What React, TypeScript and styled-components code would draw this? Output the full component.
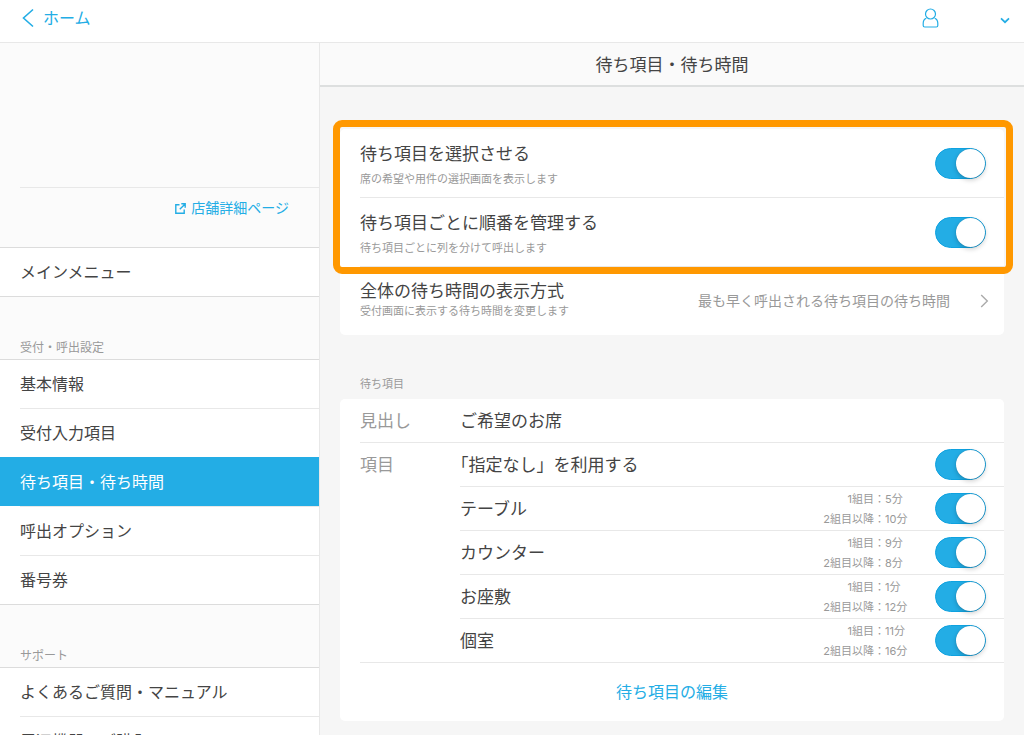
import React, { useState } from "react";
import styled, { createGlobalStyle, css } from "styled-components";

const accent = "#23ade5";
const line = "#e8e8e8";

const GlobalStyle = createGlobalStyle`
  *, *::before, *::after { box-sizing: border-box; }
  body {
    margin: 0;
    background: #fff;
    color: #444;
    font-family: Inter, "Noto Sans CJK JP", sans-serif;
    font-size: 16px;
    line-height: 20px;
  }
  button, input { font: inherit; color: inherit; }
  a { color: inherit; text-decoration: none; }
  h1, h2, p, ul, dl, dd { margin: 0; padding: 0; font-weight: 400; }
  ul { list-style: none; }
`;

const Shell = styled.div`
  display: flex;
  flex-direction: column;
  height: calc(100vh - 16px);
  overflow: hidden;
`;

const TopBar = styled.header`
  flex: none;
  display: flex;
  align-items: center;
  justify-content: space-between;
  height: 43px;
  padding: 0 14px 6px 22px;
  border-bottom: 1px solid ${line};
  color: ${accent};
`;

const HomeLink = styled.a`
  display: flex;
  align-items: center;
  gap: 8px;
`;

const AccountButton = styled.button`
  display: flex;
  align-items: center;
  gap: 61px;
  padding: 0;
  border: 0;
  background: none;
  color: ${accent};
`;

const Columns = styled.div`
  flex: 1;
  display: grid;
  grid-template-columns: 320px 1fr;
  min-height: 0;
`;

const Sidebar = styled.nav`
  min-height: 0;
  overflow: hidden;
  background: #fbfbfb;
  border-right: 1px solid ${line};
`;

const StoreBlock = styled.div`
  height: 205px;
  padding: 144px 0 0 20px;
  border-bottom: 1px solid #dcdcdc;
`;

const StoreLinkRow = styled.div`
  display: flex;
  justify-content: flex-end;
  padding: 10px 30px 0 0;
  border-top: 1px solid ${line};
`;

const StoreLink = styled.a`
  display: flex;
  align-items: center;
  gap: 5px;
  color: ${accent};
  font-size: 14px;
`;

const SideHeading = styled.h2`
  padding: 41px 20px 1px;
  color: #999;
  font-size: 12px;
`;

const SideList = styled.ul`
  background: #fff;
  border-bottom: 1px solid #dcdcdc;
`;

const SideSection = styled.section`
  ${SideList} { border-top: 1px solid #dcdcdc; }
`;

const SideLink = styled.a`
  display: flex;
  align-items: center;
  height: 48px;
  padding-bottom: 1px;
`;

const SideItem = styled.li<{ $active?: boolean }>`
  padding-left: 20px;
  background: ${(p) => (p.$active ? accent : "transparent")};
  color: ${(p) => (p.$active ? "#fff" : "inherit")};
  &:not(:first-child) > ${SideLink} {
    height: 49px;
    border-top: 1px solid ${(p) => (p.$active ? accent : line)};
  }
`;

const Main = styled.main`
  min-width: 0;
  overflow: hidden;
  background: #f6f6f6;
`;

const PageTitle = styled.h1`
  height: 44px;
  padding-top: 12px;
  background: #fafafa;
  border-bottom: 2px solid #dddfdf;
  font-size: 17px;
  text-align: center;
`;

const Content = styled.div`
  padding: 42px 20px 14px;
`;

const Card = styled.section`
  position: relative;
  padding-left: 20px;
  border-radius: 5px;
  background: #fff;
`;

const Highlight = styled.div`
  position: absolute;
  inset: -9px -9px 61px -7px;
  border: 7px solid #ff9800;
  border-radius: 9px;
  pointer-events: none;
`;

const settingRow = css`
  display: flex;
  align-items: center;
  justify-content: space-between;
  width: 100%;
  height: 68px;
  padding-right: 18px;
`;

const SettingRow = styled.div`
  ${settingRow}
  height: 69px;
  border-bottom: 1px solid ${line};
`;

const SettingButton = styled.button`
  ${settingRow}
  padding-left: 0;
  border: 0;
  background: none;
  text-align: left;
`;

const SettingText = styled.span<{ $spaced?: boolean }>`
  display: flex;
  flex-direction: column;
  gap: ${(p) => (p.$spaced ? 5 : 0)}px;
  padding-top: ${(p) => (p.$spaced ? 6 : 0)}px;
`;

const SettingName = styled.span`
  font-size: 17px;
`;

const SettingNote = styled.span`
  color: #999;
  font-size: 11px;
`;

const SettingValue = styled.span`
  display: flex;
  align-items: center;
  gap: 30px;
  margin-right: -3px;
  color: #999;
  font-size: 14px;
`;

const GroupHeading = styled.h2`
  padding: 39px 20px 5px;
  color: #999;
  font-size: 11px;
`;

const Group = styled.div`
  display: grid;
  grid-template-columns: 100px 1fr;
  border-bottom: 1px solid ${line};
`;

const GroupLabel = styled.span`
  padding-top: 12px;
  color: #999;
  font-size: 17px;
`;

const ItemRow = styled.div`
  display: flex;
  align-items: center;
  height: 44px;
  padding-right: 18px;
  border-bottom: 1px solid ${line};
  &:last-child { height: 43px; border-bottom: 0; }
`;

const ItemName = styled.span`
  flex: 1;
  font-size: 17px;
  text-spacing-trim: trim-start;
`;

const Waits = styled.dl`
  display: grid;
  grid-template-columns: auto 50px;
  color: #999;
  font-size: 11px;
  dt { text-align: right; }
`;

const EditButton = styled.button`
  display: block;
  width: 100%;
  height: 58px;
  padding: 0 20px 0 0;
  border: 0;
  background: none;
  color: ${accent};
`;

const Switch = styled.input.attrs({ type: "checkbox", role: "switch" })`
  appearance: none;
  flex: none;
  display: flex;
  width: 51px;
  height: 31px;
  margin: 0;
  padding: 0;
  border: 1px solid #0fa2e0;
  border-radius: 16px;
  background: ${accent};
  cursor: pointer;
  &::before {
    content: "";
    width: 29px;
    height: 29px;
    margin-left: auto;
    border-radius: 50%;
    background: #fff;
    box-shadow: 0 0 1px rgba(0, 60, 100, 0.4), 0 2px 5px rgba(0, 0, 0, 0.2);
  }
  &:not(:checked) { background: #fff; border-color: #ddd; }
  &:not(:checked)::before { margin-left: 0; }
`;

function Toggle({ label }: { label: string }) {
  const [on, setOn] = useState(true);
  return <Switch aria-label={label} checked={on} onChange={() => setOn(!on)} />;
}

const BackIcon = () => (
  <svg width="13" height="20" viewBox="0 0 13 20" fill="none" stroke="currentColor" strokeWidth="1.6">
    <path d="M11 1.500 1.500 10l9.500 8.500" />
  </svg>
);

const UserIcon = () => (
  <svg width="17" height="20" viewBox="0 0 17 20" fill="none" stroke="currentColor" strokeWidth="1.2">
    <circle cx="8.500" cy="6" r="5" />
    <path d="M4.300 10.200C2.200 11 1.200 12.800 1.200 15.200V17.500Q1.200 19 2.700 19H14.300Q15.800 19 15.800 17.500V15.200C15.800 12.800 14.800 11 12.700 10.200" />
  </svg>
);

const DownIcon = () => (
  <svg width="10" height="12" viewBox="0 0 10 12" fill="none" stroke="currentColor" strokeWidth="1.700">
    <path d="M1 6.300 5 10.200 9 6.300" />
  </svg>
);

const ExternalIcon = () => (
  <svg width="11" height="11" viewBox="0 0 11 11" fill="none" stroke="currentColor" strokeWidth="1.400">
    <path d="M4.500 1.800H.8V10.200H9.200V6.500M6.300.8H10.200V4.700M10.100.9 4.800 6.200" />
  </svg>
);

const NextIcon = () => (
  <svg width="9" height="14" viewBox="0 0 9 14" fill="none" stroke="#aaa" strokeWidth="1.400">
    <path d="M1.200 1 7.300 7l-6.100 6" />
  </svg>
);

const receptionLinks = ["基本情報", "受付入力項目", "待ち項目・待ち時間", "呼出オプション", "番号券"];
const supportLinks = ["よくあるご質問・マニュアル", "周辺機器のご購入"];

const items = [
  { name: "テーブル", first: 5, later: 10 },
  { name: "カウンター", first: 9, later: 8 },
  { name: "お座敷", first: 1, later: 12 },
  { name: "個室", first: 11, later: 16 },
];

function LinkList({ labels, active }: { labels: string[]; active?: string }) {
  return (
    <SideList>
      {labels.map((label) => (
        <SideItem key={label} $active={label === active}>
          <SideLink href="#" aria-current={label === active ? "page" : undefined}>
            {label}
          </SideLink>
        </SideItem>
      ))}
    </SideList>
  );
}

export default function App() {
  return (
    <Shell lang="ja">
      <GlobalStyle />
      <TopBar>
        <HomeLink href="#">
          <BackIcon />
          ホーム
        </HomeLink>
        <AccountButton aria-label="アカウント">
          <UserIcon />
          <DownIcon />
        </AccountButton>
      </TopBar>
      <Columns>
        <Sidebar>
          <StoreBlock>
            <StoreLinkRow>
              <StoreLink href="#">
                <ExternalIcon />
                店舗詳細ページ
              </StoreLink>
            </StoreLinkRow>
          </StoreBlock>
          <LinkList labels={["メインメニュー"]} />
          <SideSection>
            <SideHeading>受付・呼出設定</SideHeading>
            <LinkList labels={receptionLinks} active="待ち項目・待ち時間" />
          </SideSection>
          <SideSection>
            <SideHeading>サポート</SideHeading>
            <LinkList labels={supportLinks} />
          </SideSection>
        </Sidebar>
        <Main>
          <PageTitle>待ち項目・待ち時間</PageTitle>
          <Content>
            <Card>
              <SettingRow>
                <SettingText $spaced>
                  <SettingName>待ち項目を選択させる</SettingName>
                  <SettingNote>席の希望や用件の選択画面を表示します</SettingNote>
                </SettingText>
                <Toggle label="待ち項目を選択させる" />
              </SettingRow>
              <SettingRow>
                <SettingText $spaced>
                  <SettingName>待ち項目ごとに順番を管理する</SettingName>
                  <SettingNote>待ち項目ごとに列を分けて呼出します</SettingNote>
                </SettingText>
                <Toggle label="待ち項目ごとに順番を管理する" />
              </SettingRow>
              <SettingButton>
                <SettingText>
                  <SettingName>全体の待ち時間の表示方式</SettingName>
                  <SettingNote>受付画面に表示する待ち時間を変更します</SettingNote>
                </SettingText>
                <SettingValue>
                  最も早く呼出される待ち項目の待ち時間
                  <NextIcon />
                </SettingValue>
              </SettingButton>
              <Highlight />
            </Card>
            <GroupHeading>待ち項目</GroupHeading>
            <Card>
              <Group>
                <GroupLabel>見出し</GroupLabel>
                <div>
                  <ItemRow>
                    <ItemName>ご希望のお席</ItemName>
                  </ItemRow>
                </div>
              </Group>
              <Group>
                <GroupLabel>項目</GroupLabel>
                <div>
                  <ItemRow>
                    <ItemName>「指定なし」を利用する</ItemName>
                    <Toggle label="「指定なし」を利用する" />
                  </ItemRow>
                  {items.map((item) => (
                    <ItemRow key={item.name}>
                      <ItemName>{item.name}</ItemName>
                      <Waits>
                        <dt>1組目：</dt>
                        <dd>{item.first}分</dd>
                        <dt>2組目以降：</dt>
                        <dd>{item.later}分</dd>
                      </Waits>
                      <Toggle label={item.name} />
                    </ItemRow>
                  ))}
                </div>
              </Group>
              <EditButton>待ち項目の編集</EditButton>
            </Card>
          </Content>
        </Main>
      </Columns>
    </Shell>
  );
}
